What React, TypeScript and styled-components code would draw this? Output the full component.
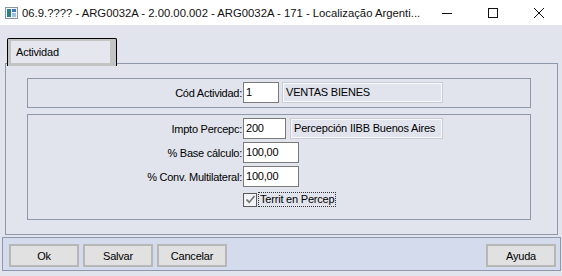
import styled, { createGlobalStyle } from "styled-components";

const GlobalStyle = createGlobalStyle`
    html, body {
        margin: 0;
        padding: 0;
        background: #e1e4ec;
    }
    * {
        box-sizing: border-box;
    }
`;

const uiFont = `"Liberation Sans", Arial, sans-serif`;

export default function App() {
    return (
        <>
            <GlobalStyle/>
            <Window>
                <TitleBar>
                    <AppIcon/>
                    <Title>06.9.???? - ARG0032A - 2.00.00.002 - ARG0032A - 171 - Localização Argenti...</Title>
                    <WinControls>
                        <WinButton aria-label="minimize">
                            <svg width="10" height="10" viewBox="0 0 10 10">
                                <path d="M0 5.5h10" stroke="#111" strokeWidth="1"/>
                            </svg>
                        </WinButton>
                        <WinButton aria-label="maximize">
                            <svg width="10" height="10" viewBox="0 0 10 10">
                                <rect x="0.5" y="0.5" width="9" height="9" fill="none" stroke="#111"/>
                            </svg>
                        </WinButton>
                        <WinButton aria-label="close">
                            <svg width="10" height="10" viewBox="0 0 10 10">
                                <path d="M0 0L10 10M10 0L0 10" stroke="#111" strokeWidth="1"/>
                            </svg>
                        </WinButton>
                    </WinControls>
                </TitleBar>

                <TabStrip>
                    <Tab>Actividad</Tab>
                </TabStrip>

                <TabPanel>
                    <GroupBox>
                        <Row>
                            <Label>Cód Actividad:</Label>
                            <Field $width={36}>1</Field>
                            <ReadOnly $width={161}>VENTAS BIENES</ReadOnly>
                        </Row>
                    </GroupBox>
                    <GroupBox $bottom={12}>
                        <Row>
                            <Label>Impto Percepc:</Label>
                            <Field $width={43}>200</Field>
                            <ReadOnly $width={153} $gap={4}>Percepción IIBB Buenos Aires</ReadOnly>
                        </Row>
                        <Row>
                            <Label>% Base cálculo:</Label>
                            <Field $width={56}>100,00</Field>
                        </Row>
                        <Row>
                            <Label>% Conv. Multilateral:</Label>
                            <Field $width={56}>100,00</Field>
                        </Row>
                        <CheckRow>
                            <CheckBox>
                                <svg width="11" height="11" viewBox="0 0 11 11">
                                    <path d="M1.5 5.5L4.2 8.4L9.5 2" fill="none" stroke="#6f6f6f" strokeWidth="1.6"/>
                                </svg>
                            </CheckBox>
                            <CheckLabel>Territ en Percep</CheckLabel>
                        </CheckRow>
                    </GroupBox>
                </TabPanel>

                <ButtonBar>
                    <Button>Ok</Button>
                    <Button>Salvar</Button>
                    <Button>Cancelar</Button>
                    <Spacer/>
                    <Button>Ayuda</Button>
                </ButtonBar>
            </Window>
        </>
    );
}

const AppIcon = () => (
    <svg width="13" height="12" viewBox="0 0 13 12" style={{flexShrink: 0}}>
        <rect x="0.5" y="0.5" width="12" height="11" fill="#f4f6f8" stroke="#8a949e"/>
        <rect x="2" y="2" width="4" height="8" fill="#2f7f86"/>
        <rect x="7" y="2" width="4" height="3" fill="#3d7bc0"/>
        <rect x="7" y="6" width="4" height="4" fill="#9fc3df"/>
    </svg>
);

const Window = styled.div`
    width: 562px;
    height: 276px;
    display: flex;
    flex-direction: column;
    background: #e1e4ec;
    overflow: hidden;
`;

const TitleBar = styled.div`
    height: 25px;
    background: #fff;
    display: flex;
    align-items: center;
    padding-left: 5px;
    gap: 4px;
`;

const Title = styled.div`
    font-family: ${uiFont};
    font-size: 11.3px;
    color: #111;
    white-space: nowrap;
    flex: 1;
    min-width: 0;
    overflow: hidden;
`;

const WinControls = styled.div`
    display: flex;
    height: 100%;
    width: 138px;
    flex-shrink: 0;
`;

const WinButton = styled.div`
    width: 46px;
    height: 100%;
    display: flex;
    align-items: center;
    justify-content: center;
`;

const TabStrip = styled.div`
    display: flex;
    padding: 13px 0 0 7px;
`;

const Tab = styled.div`
    position: relative;
    z-index: 1;
    width: 110px;
    height: 28px;
    margin-bottom: -3px;
    border: 1px solid #000;
    border-bottom: none;
    border-radius: 2px 2px 0 0;
    background: #e4e7ee;
    box-shadow: inset 3px 2px 0 #c3c3c3, inset -6px -3px 0 #c3c3c3;
    font-family: ${uiFont};
    font-size: 11px;
    letter-spacing: -0.2px;
    color: #000;
    padding: 7px 0 0 8px;
`;

const TabPanel = styled.div`
    margin: 0 4px 0 5px;
    height: 172px;
    border: 1px solid #8e98aa;
    padding: 14px 26px 0 21px;
    display: flex;
    flex-direction: column;
    gap: 6px;
`;

const GroupBox = styled.div<{ $bottom?: number }>`
    border: 1px solid #8e98aa;
    padding: 3px 0 ${p => p.$bottom ?? 4}px 0;
    display: flex;
    flex-direction: column;
    gap: 3px;
`;

const Row = styled.div`
    display: flex;
    align-items: center;
    height: 21px;
`;

const Label = styled.div`
    width: 215px;
    padding-right: 1px;
    text-align: right;
    font-family: ${uiFont};
    font-size: 11px;
    letter-spacing: -0.25px;
    color: #000;
    white-space: nowrap;
`;

const Field = styled.div<{ $width: number }>`
    width: ${p => p.$width}px;
    height: 21px;
    background: #fff;
    border: 1px solid #7a7a7a;
    font-family: ${uiFont};
    font-size: 11px;
    letter-spacing: -0.2px;
    color: #000;
    padding: 3px 0 0 2px;
    white-space: nowrap;
`;

const ReadOnly = styled.div<{ $width: number; $gap?: number }>`
    width: ${p => p.$width}px;
    height: 21px;
    margin-left: ${p => p.$gap ?? 3}px;
    border: 1px solid #c9ccd3;
    box-shadow: inset 1px 1px 0 #f7f8fb, inset -1px -1px 0 #f7f8fb;
    font-family: ${uiFont};
    font-size: 11px;
    letter-spacing: -0.2px;
    color: #000;
    padding: 3px 0 0 3px;
    white-space: nowrap;
`;

const CheckRow = styled.div`
    display: flex;
    align-items: center;
    padding: 2px 0 0 215px;
    gap: 1px;
`;

const CheckBox = styled.div`
    width: 14px;
    height: 14px;
    border: 1px solid #5a5a5a;
    background: #f2f3f6;
    display: flex;
    align-items: center;
    justify-content: center;
`;

const CheckLabel = styled.div`
    height: 15px;
    border: 1px dotted #333;
    font-family: ${uiFont};
    font-size: 11px;
    letter-spacing: -0.2px;
    color: #000;
    padding: 0 1px;
    line-height: 13px;
    white-space: nowrap;
`;

const ButtonBar = styled.div`
    margin: 2px 1px 0 2px;
    height: 34px;
    border: 1px solid #8e98aa;
    background: #d3dbec;
    display: flex;
    align-items: flex-start;
    padding: 6px 4px 0 6px;
    gap: 4px;
`;

const Spacer = styled.div`
    flex: 1;
`;

const Button = styled.div`
    width: 70px;
    height: 23px;
    border: 2px solid #b7b7b7;
    background: #e1e1e1;
    font-family: ${uiFont};
    font-size: 11px;
    letter-spacing: -0.2px;
    color: #000;
    display: flex;
    align-items: center;
    justify-content: center;
`;
